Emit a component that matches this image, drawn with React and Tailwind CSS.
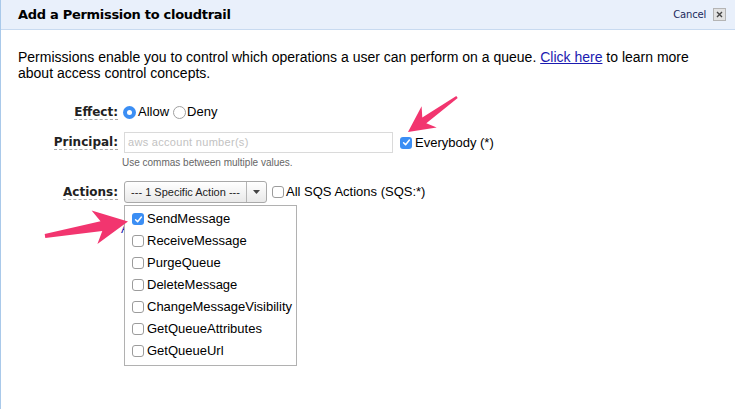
import React from "react";

const sans = { fontFamily: '"Liberation Sans", Arial, sans-serif' };
const deja = { fontFamily: '"DejaVu Sans", Verdana, sans-serif' };

function Check({ checked }) {
  if (checked) {
    return (
      <span className="w-[12px] h-[12px] rounded-[3px] bg-[#3b8ef4] flex items-center justify-center shrink-0">
        <svg width="9" height="9" viewBox="0 0 9 9">
          <path d="M1.6 4.8 L3.6 6.8 L7.4 2" fill="none" stroke="white" strokeWidth="1.5" strokeLinecap="round" strokeLinejoin="round" />
        </svg>
      </span>
    );
  }
  return <span className="block w-[12px] h-[12px] rounded-[3px] border border-[#9c9c9c] bg-white shrink-0" />;
}

function Radio({ checked }) {
  if (checked) {
    return (
      <span className="w-[13px] h-[13px] rounded-full bg-[#3b8ef4] flex items-center justify-center shrink-0">
        <span className="block w-[5px] h-[5px] rounded-full bg-white" />
      </span>
    );
  }
  return <span className="block w-[13px] h-[13px] rounded-full border border-[#a0a0a0] bg-white shrink-0" />;
}

function Label({ children }) {
  return (
    <div className="w-[117px] shrink-0 flex justify-end">
      <span className="text-[12px] leading-[14px] font-bold text-[#222] border-b border-dashed border-[#a8a8a8]" style={deja}>
        {children}
      </span>
    </div>
  );
}

const actions = [
  "SendMessage",
  "ReceiveMessage",
  "PurgeQueue",
  "DeleteMessage",
  "ChangeMessageVisibility",
  "GetQueueAttributes",
  "GetQueueUrl",
];

export default function App() {
  return (
    <div className="w-[735px] h-[409px] bg-white border-l border-[#a9c9ea] relative overflow-hidden text-black" style={sans}>
      <div className="h-[30px] bg-[#e9f0fb] border-b border-[#c8daf0] flex items-center pl-[17px] pr-[9px]">
        <h1 className="font-bold text-[13px] leading-[16px] tracking-[-0.3px] text-black" style={deja}>
          Add a Permission to cloudtrail
        </h1>
        <div className="ml-auto flex items-center gap-[7px]">
          <span className="text-[10px] tracking-[-0.2px] text-[#1c2b5b]" style={deja}>Cancel</span>
          <span className="w-[13px] h-[13px] bg-[#e2e2e2] border border-[#b4b4b4] flex items-center justify-center">
            <svg width="7" height="7" viewBox="0 0 7 7">
              <path d="M1 1 L6 6 M6 1 L1 6" stroke="#444" strokeWidth="1.4" />
            </svg>
          </span>
        </div>
      </div>

      <p className="mt-[19px] pl-[17px] w-[700px] text-[14px] leading-[16px]">
        Permissions enable you to control which operations a user can perform on a queue.{" "}
        <span className="text-[#1b1bb0] underline">Click here</span> to learn more about access control concepts.
      </p>

      <div className="mt-[24px] flex items-center h-[14px]">
        <Label>Effect:</Label>
        <div className="ml-[5px] flex items-center text-[13px]">
          <Radio checked />
          <span className="ml-[2px]">Allow</span>
          <span className="ml-[4px]"><Radio /></span>
          <span className="ml-[1px]">Deny</span>
        </div>
      </div>

      <div className="mt-[13px] flex items-center h-[21px]">
        <Label>Principal:</Label>
        <div className="ml-[6px] w-[269px] h-[21px] border border-[#dadada] flex items-center px-[3px] text-[11px] tracking-[0.3px] text-[#c2c2c2]">
          aws account number(s)
        </div>
        <span className="ml-[7px]"><Check checked /></span>
        <span className="ml-[3px] text-[13px]">Everybody (*)</span>
      </div>
      <div className="ml-[121px] mt-[4px] text-[10px] leading-[12px] text-[#666]">
        Use commas between multiple values.
      </div>

      <div className="mt-[12px] flex items-center h-[22px]">
        <Label>Actions:</Label>
        <div className="ml-[6px] relative">
          <div className="w-[143px] h-[22px] rounded-[3px] border border-[#a9a9a9] bg-[linear-gradient(#ffffff,#e9e9e9)] flex">
            <div className="w-[122px] border-r border-[#b5b5b5] flex items-center justify-center text-[11px] text-[#222]">
              --- 1 Specific Action ---
            </div>
            <div className="flex-1 flex items-center justify-center">
              <svg width="7" height="4" viewBox="0 0 7 4"><path d="M0 0 H7 L3.5 4 Z" fill="#444" /></svg>
            </div>
          </div>
          <div className="absolute left-0 top-full mt-[2px] w-[173px] h-[161px] border border-[#b1b1b1] bg-white pt-[2px] z-10">
            {actions.map((a, i) => (
              <div key={a} className="h-[22px] flex items-center pl-[7px] gap-[3px] text-[13px]">
                <Check checked={i === 0} />
                <span>{a}</span>
              </div>
            ))}
          </div>
        </div>
        <span className="ml-[5px]"><Check /></span>
        <span className="ml-[2px] text-[13px]">All SQS Actions (SQS:*)</span>
      </div>
      <div className="ml-[120px] mt-[18px] text-[13px] leading-[15px] text-[#1b1bb0]">Add</div>

      <svg className="absolute top-0 left-[-1px] pointer-events-none z-20" width="735" height="409">
        <polygon
          fill="#f2356f"
          points="408,132 436.7,127.5 426.3,123.2 457.7,98 456.3,96 422.3,117.6 421.6,106.3"
        />
        <polygon
          fill="#f2356f"
          points="128,221.5 97.4,244.1 102.3,231 45.3,238 44.7,234 100.5,221.2 91.6,210.6"
        />
      </svg>
    </div>
  );
}
